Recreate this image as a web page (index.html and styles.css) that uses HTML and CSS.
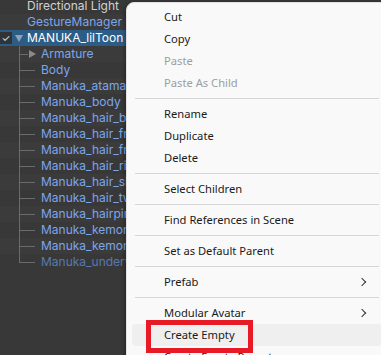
FILE: index.html
```html
<!DOCTYPE html>
<html>
<head>
	<title>Hierarchy menu</title>
	<meta charset="utf-8">
	<link rel="stylesheet" href="styles.css">
</head>
<body>
  <div class="screen">
    <!-- ヒエラルキー -->
    <div class="hierarchy">
      <div class="row"><span class="name plain">Directional Light</span></div>
      <div class="row"><span class="name prefab">GestureManager</span></div>
      <div class="row selected">
        <span class="toggle">&#10003;</span>
        <span class="fold open"></span>
        <span class="name">MANUKA_lilToon</span>
      </div>
      <div class="row child"><span class="branch short"></span><span class="fold closed"></span><span class="name prefab">Armature</span></div>
      <div class="row child"><span class="branch"></span><span class="name prefab">Body</span></div>
      <div class="row child"><span class="branch"></span><span class="name prefab">Manuka_atama</span></div>
      <div class="row child"><span class="branch"></span><span class="name prefab">Manuka_body</span></div>
      <div class="row child"><span class="branch"></span><span class="name prefab">Manuka_hair_back</span></div>
      <div class="row child"><span class="branch"></span><span class="name prefab">Manuka_hair_front</span></div>
      <div class="row child"><span class="branch"></span><span class="name prefab">Manuka_hair_front_side</span></div>
      <div class="row child"><span class="branch"></span><span class="name prefab">Manuka_hair_ribbon</span></div>
      <div class="row child"><span class="branch"></span><span class="name prefab">Manuka_hair_side</span></div>
      <div class="row child"><span class="branch"></span><span class="name prefab">Manuka_hair_twin</span></div>
      <div class="row child"><span class="branch"></span><span class="name prefab">Manuka_hairpin</span></div>
      <div class="row child"><span class="branch"></span><span class="name prefab">Manuka_kemomimi</span></div>
      <div class="row child"><span class="branch"></span><span class="name prefab">Manuka_kemono_tail</span></div>
      <div class="row child last"><span class="branch"></span><span class="name inactive">Manuka_underwear</span></div>
    </div>

    <!-- 右クリックメニュー -->
    <div class="menu">
      <div class="item">Cut</div>
      <div class="item">Copy</div>
      <div class="item disabled">Paste</div>
      <div class="item disabled">Paste As Child</div>
      <div class="sep"></div>
      <div class="item">Rename</div>
      <div class="item">Duplicate</div>
      <div class="item">Delete</div>
      <div class="sep"></div>
      <div class="item">Select Children</div>
      <div class="sep"></div>
      <div class="item">Find References in Scene</div>
      <div class="sep"></div>
      <div class="item">Set as Default Parent</div>
      <div class="sep"></div>
      <div class="item sub">Prefab</div>
      <div class="sep"></div>
      <div class="item sub">Modular Avatar</div>
      <div class="item hover">Create Empty<span class="mark"></span></div>
      <div class="item">Create Empty Parent</div>
    </div>
  </div>
</body>
</html>
```

FILE: styles.css
```css
html, body{
	margin: 0;
	padding: 0;
}
body{
	width: 381px;
	height: 355px;
	overflow: hidden;
	background: #383838;
}
.screen{
	position: relative;
	width: 381px;
	height: 355px;
	overflow: hidden;
}
.hierarchy{
	margin-top: -2px;
	font-family: Inter, "Noto Sans", sans-serif;
	font-size: 12px;
}
.row{
	position: relative;
	display: flex;
	align-items: center;
	height: 16px;
	padding-left: 27px;
	white-space: nowrap;
	background: #383838;
}
.row:nth-child(even){
	background: #3b3b3b;
}
.row.selected{
	background: #2c5d87;
}
.row.child{
	padding-left: 41px;
}
.name{
	color: #7ba6ee;
	line-height: 16px;
}
.name.plain{
	color: #d2d2d2;
}
.row.selected .name{
	color: #ffffff;
}
.name.inactive{
	color: #5878b0;
}
.toggle{
	position: absolute;
	left: 0;
	top: 2px;
	width: 12px;
	height: 12px;
	background: #333;
	color: #e6e6e6;
	font-size: 10px;
	line-height: 12px;
	text-align: center;
}
.fold{
	position: absolute;
	width: 0;
	height: 0;
}
.fold.open{
	left: 15px;
	top: 5px;
	border-left: 4px solid transparent;
	border-right: 4px solid transparent;
	border-top: 7px solid #8fa3b8;
}
.fold.closed{
	left: 29px;
	top: 4px;
	border-top: 4px solid transparent;
	border-bottom: 4px solid transparent;
	border-left: 7px solid #8a8a8a;
}
/* ツリーの線 */
.branch{
	position: absolute;
	left: 19px;
	top: 0;
	width: 16px;
	height: 9px;
	border-left: 1px solid #6b6b6b;
	border-bottom: 1px solid #6b6b6b;
	box-sizing: border-box;
}
.branch.short{
	width: 9px;
}
.row.child .branch::after{
	content: "";
	position: absolute;
	left: -1px;
	top: 9px;
	height: 7px;
	border-left: 1px solid #6b6b6b;
}
.row.last .branch::after{
	display: none;
}

.menu{
	position: absolute;
	left: 126px;
	top: 2px;
	width: 262px;
	height: 400px;
	padding-top: 3px;
	box-sizing: border-box;
	background: #f9f9f9;
	border: 1px solid #e3e3e3;
	border-radius: 8px;
	box-shadow: -1px 1px 4px rgba(0, 0, 0, 0.35);
	font-family: "Noto Sans", sans-serif;
	font-size: 11.2px;
	color: #1a1a1a;
}
.item{
	position: relative;
	height: 22px;
	line-height: 22px;
	margin: 0 5px;
	padding-left: 32px;
	border-radius: 4px;
	white-space: nowrap;
}
.item.disabled{
	color: #9d9d9d;
}
.item.hover{
	background: #efefef;
}
.item.sub::after{
	content: "";
	position: absolute;
	right: 17px;
	top: 8px;
	width: 5px;
	height: 5px;
	border-top: 1.3px solid #333;
	border-right: 1.3px solid #333;
	transform: rotate(45deg);
}
.sep{
	height: 1px;
	margin: 4px 8px;
	background: #d6d6d6;
}
.mark{
	position: absolute;
	left: 14px;
	top: -4px;
	width: 107px;
	height: 33px;
	box-sizing: border-box;
	border: 5px solid #e81a25;
}
```
